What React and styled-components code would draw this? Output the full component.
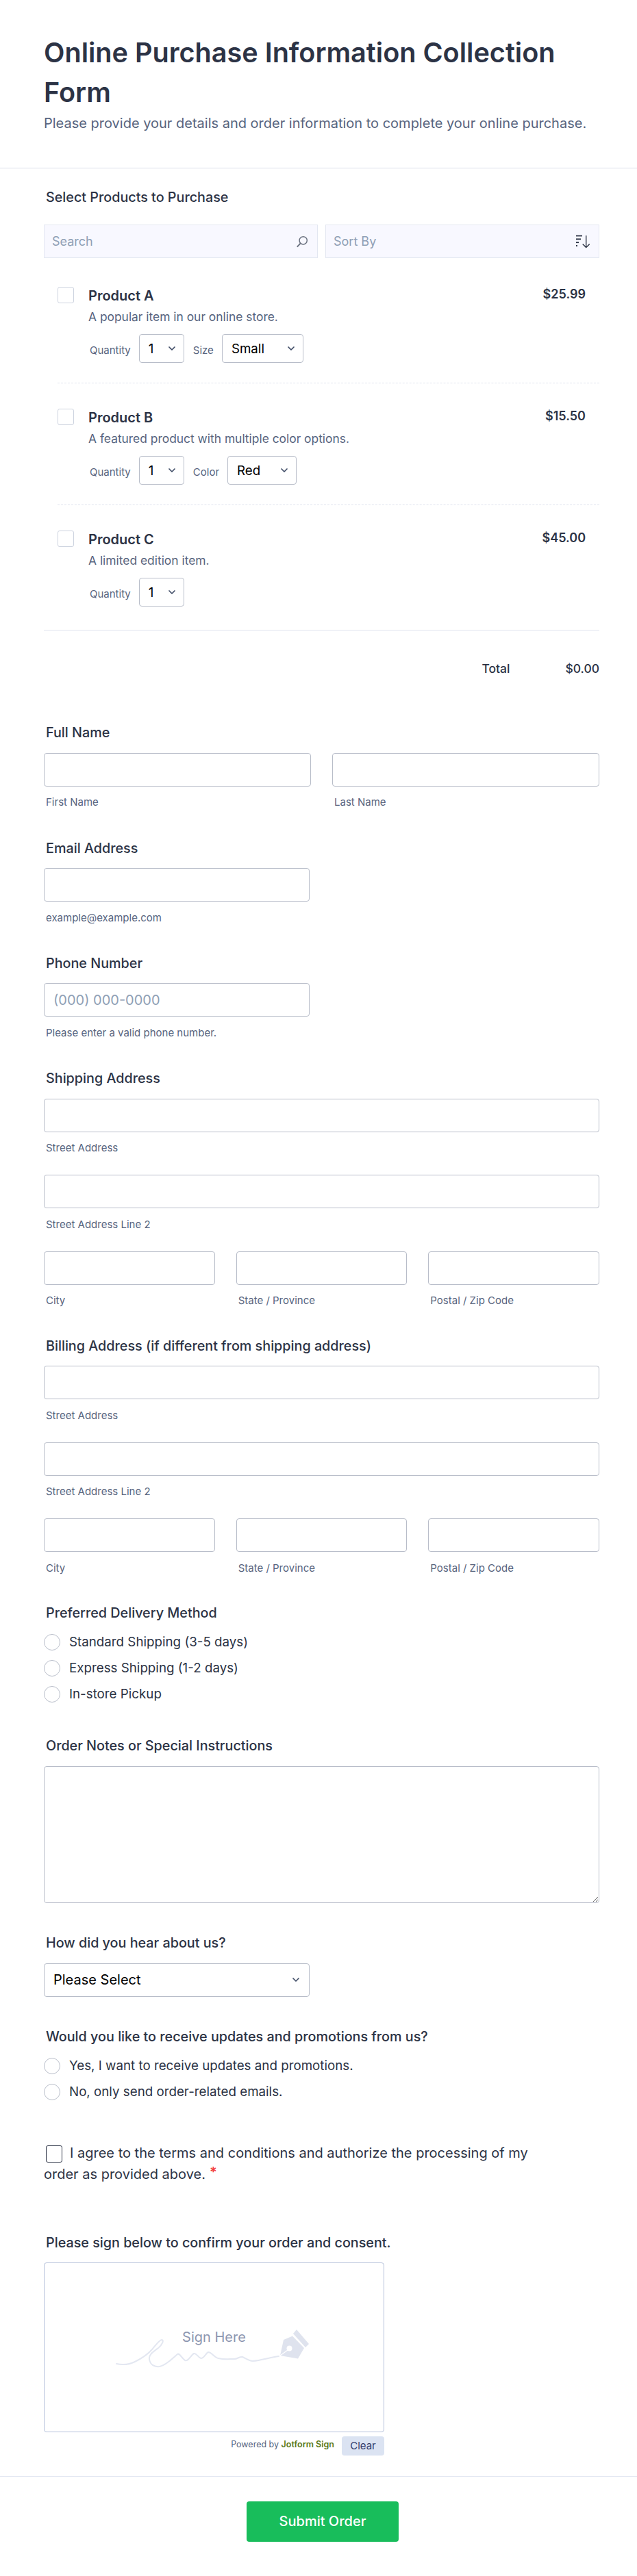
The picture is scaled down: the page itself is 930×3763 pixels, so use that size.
import React from 'react';
import styled, { createGlobalStyle } from 'styled-components';
import { ChevronDown } from 'lucide-react';

const GlobalStyle = createGlobalStyle`
  html, body {
    margin: 0;
    padding: 0;
    background: #fff;
  }
  body {
    font-family: Inter, "Noto Sans", sans-serif;
    color: #2c3345;
  }
  * {
    box-sizing: border-box;
  }
`;

const Page = styled.div`
  width: 930px;
  height: 3763px;
  overflow: hidden;
  background: #fff;
`;

const Header = styled.header`
  padding: 48px 64px 53px;
  border-bottom: 1px solid #dadee9;
`;

const Title = styled.h1`
  margin: 0;
  font-size: 39.6px;
  line-height: 58px;
  font-weight: 600;
  color: #2c3345;
`;

const Subtitle = styled.p`
  margin: 4px 0 0;
  font-size: 20px;
  line-height: 24px;
  color: #57647e;
`;

const Body = styled.div`
  padding: 29px 55px 0 64px;
`;

const Label = styled.div`
  margin: ${p => p.$top || 0}px 0 0 3px;
  font-size: 19.75px;
  line-height: 26px;
  font-weight: 500;
  color: #2c3345;
`;

const Toolbar = styled.div`
  display: grid;
  grid-template-columns: 1fr 1fr;
  gap: 11px;
  margin-top: 27px;
`;

const ToolBox = styled.div`
  height: 49px;
  display: flex;
  align-items: center;
  justify-content: space-between;
  padding: 0 13px 0 11px;
  background: #f8f8ff;
  border: 1px solid #e3e7f1;
  font-size: 18px;
  color: #8f9fb5;
`;

const Product = styled.div`
  display: flex;
  margin-left: 20px;
  padding: ${p => p.$first ? '42px' : '37px'} 20px ${p => p.$last ? '34px' : '29px'} 0;
  border-bottom: ${p => p.$last ? 'none' : '1px dashed #dfe3ee'};
`;

const ProductCheck = styled.span`
  flex: none;
  width: 24px;
  height: 24px;
  margin-right: 21px;
  border: 1px solid #cdd3df;
  border-radius: 3px;
`;

const ProductInfo = styled.div`
  flex: 1;
`;

const ProductName = styled.div`
  font-size: 20px;
  line-height: 26px;
  font-weight: 600;
  color: #2c3345;
`;

const ProductDesc = styled.div`
  margin-top: 5px;
  font-size: 17.4px;
  line-height: 26px;
  color: #57647e;
`;

const Options = styled.div`
  display: flex;
  align-items: center;
  margin-top: 12px;
`;

const OptionLabel = styled.span`
  margin: 5px 12px 0 ${p => p.$first ? '2px' : '13px'};
  font-size: 15px;
  line-height: 18px;
  color: #57647e;
`;

const Price = styled.div`
  flex: none;
  font-size: 18px;
  line-height: 22px;
  font-weight: 600;
  color: #2c3345;
`;

const TotalRow = styled.div`
  display: flex;
  justify-content: flex-end;
  gap: 81px;
  padding: 44px 0 0;
  border-top: 1px solid #dfe3ee;
  font-size: 17.5px;
  line-height: 24px;
  font-weight: 500;
  color: #2c3345;
`;

const SelectWrap = styled.div`
  position: relative;
  width: ${p => p.$width}px;
  height: ${p => p.$height || 42}px;
  flex: none;
  svg {
    position: absolute;
    top: 50%;
    right: ${p => p.$arrow || 10}px;
    transform: translateY(-50%);
    color: #3f4c66;
    pointer-events: none;
  }
`;

const SelectBox = styled.select`
  display: block;
  appearance: none;
  width: 100%;
  height: 100%;
  padding: 0 0 0 13px;
  background: #fff;
  border: 1px solid #b8bdc9;
  border-radius: 4px;
  font-family: Inter, sans-serif;
  font-size: ${p => p.$size || 18.75}px;
  color: #000;
`;

const Row = styled.div`
  display: grid;
  grid-template-columns: ${p => p.$cols};
  gap: 31px;
  margin-top: ${p => p.$top || 0}px;
`;

const Input = styled.input`
  display: block;
  width: ${p => p.$width || '100%'};
  height: 49px;
  padding: 0 13px;
  background: #fff;
  border: 1px solid #b8bdc9;
  border-radius: 4px;
  font-family: Inter, sans-serif;
  font-size: 20px;
  &::placeholder {
    color: #8f9fb5;
    opacity: 1;
  }
`;

const SubLabel = styled.div`
  margin: 14.5px 0 0 3px;
  font-size: 15px;
  line-height: 18px;
  color: #57647e;
`;

const FieldInput = styled.div`
  margin-top: 16.5px;
`;

const Radios = styled.div`
  display: flex;
  flex-direction: column;
  gap: 14.3px;
  margin-top: 18px;
`;

const RadioRow = styled.div`
  display: flex;
  align-items: center;
  gap: 13px;
  font-size: 18.75px;
  line-height: 24px;
  color: #2c3345;
`;

const RadioDot = styled.span`
  flex: none;
  width: 24px;
  height: 24px;
  border: 1px solid #b8bdc9;
  border-radius: 50%;
`;

const Notes = styled.textarea`
  display: block;
  width: 100%;
  height: 200px;
  margin-top: 17px;
  background: #fff;
  border: 1px solid #b8bdc9;
  border-radius: 4px;
`;

const Terms = styled.div`
  width: 740px;
  margin-top: 63px;
  font-size: 20px;
  line-height: 28px;
  color: #2c3345;
`;

const TermsBox = styled.span`
  display: inline-block;
  width: 24px;
  height: 25px;
  margin: 0 11px 0 3px;
  border: 1.5px solid #2c3345;
  border-radius: 3px;
  vertical-align: -7px;
`;

const Star = styled.span`
  margin-left: 6px;
  color: #f23a3c;
  font-weight: 600;
  vertical-align: 3px;
`;

const Signature = styled.div`
  position: relative;
  width: 497px;
  height: 248px;
  margin-top: 16px;
  border: 1px solid #b4c0da;
  border-radius: 4px;
`;

const SignHere = styled.span`
  position: absolute;
  left: 0;
  right: 0;
  top: 95px;
  text-align: center;
  font-size: 20px;
  line-height: 26px;
  color: #8d96b0;
`;

const SignDrawing = styled.svg`
  position: absolute;
  left: 100px;
  top: 86px;
`;

const SignFooter = styled.div`
  width: 497px;
  display: flex;
  justify-content: flex-end;
  align-items: center;
  gap: 11px;
  margin-top: 6px;
`;

const Powered = styled.span`
  margin-bottom: 4px;
  font-size: 12.5px;
  line-height: 16px;
  color: #57647e;
  b {
    font-weight: 600;
    color: #5b7a1a;
  }
`;

const ClearButton = styled.button`
  width: 62px;
  height: 28px;
  padding: 0;
  background: #dbe3f2;
  border: none;
  border-radius: 4px;
  font-family: Inter, sans-serif;
  font-size: 15px;
  color: #343c6a;
`;

const Footer = styled.footer`
  display: flex;
  justify-content: center;
  margin-top: 30px;
  padding: 36px 0 0;
  border-top: 1px solid #e3e7f1;
`;

const Submit = styled.button`
  width: 222px;
  height: 59px;
  margin-left: 12px;
  background: #18bd5b;
  border: none;
  border-radius: 4px;
  font-family: Inter, sans-serif;
  font-size: 20px;
  font-weight: 500;
  color: #fff;
`;

const SearchIcon = () => (
  <svg width="18" height="18" viewBox="0 0 18 18" fill="none" stroke="#6b7280">
    <circle cx="10.7" cy="7.3" r="5.6" strokeWidth="1.5" />
    <path d="M6.8 11.4 1.8 16.6" strokeWidth="2" />
  </svg>
);

const SortIcon = () => (
  <svg width="20" height="20" viewBox="0 0 20 20" fill="none" stroke="#2c3345">
    <path d="M0 1.5h9" strokeWidth="1.8" />
    <path d="M0 6.3h7" strokeWidth="1.8" />
    <path d="M0 11.2h4" strokeWidth="1.8" />
    <path d="M0 16h2" strokeWidth="1.8" />
    <path d="M14.7 1v17.5M9.7 13.5l5 5 5-5" strokeWidth="1.4" />
  </svg>
);

const Dropdown = ({ width, height, arrow, size, value }) => (
  <SelectWrap $width={width} $height={height} $arrow={arrow}>
    <SelectBox $size={size}><option>{value}</option></SelectBox>
    <ChevronDown size={16} strokeWidth={2.5} />
  </SelectWrap>
);

const ProductRow = ({ name, desc, price, first, last, extra }) => (
  <Product $first={first} $last={last}>
    <ProductCheck />
    <ProductInfo>
      <ProductName>{name}</ProductName>
      <ProductDesc>{desc}</ProductDesc>
      <Options>
        <OptionLabel $first>Quantity</OptionLabel>
        <Dropdown width={66} value="1" />
        {extra && <OptionLabel>{extra.label}</OptionLabel>}
        {extra && <Dropdown width={extra.width} value={extra.value} />}
      </Options>
    </ProductInfo>
    <Price>{price}</Price>
  </Product>
);

const AddressBlock = () => (
  <FieldInput>
    <Input />
    <SubLabel>Street Address</SubLabel>
    <Row $cols="1fr" $top={30}>
      <div>
        <Input />
        <SubLabel>Street Address Line 2</SubLabel>
      </div>
    </Row>
    <Row $cols="1fr 1fr 1fr" $top={30}>
      <div><Input /><SubLabel>City</SubLabel></div>
      <div><Input /><SubLabel>State / Province</SubLabel></div>
      <div><Input /><SubLabel>Postal / Zip Code</SubLabel></div>
    </Row>
  </FieldInput>
);

export default function App() {
  return (
    <Page>
      <GlobalStyle />
      <Header>
        <Title>Online Purchase Information Collection Form</Title>
        <Subtitle>Please provide your details and order information to complete your online purchase.</Subtitle>
      </Header>
      <Body>
        <Label>Select Products to Purchase</Label>
        <Toolbar>
          <ToolBox>Search<SearchIcon /></ToolBox>
          <ToolBox>Sort By<SortIcon /></ToolBox>
        </Toolbar>
        <ProductRow first name="Product A" desc="A popular item in our online store." price="$25.99"
          extra={{ label: 'Size', width: 119, value: 'Small' }} />
        <ProductRow name="Product B" desc="A featured product with multiple color options." price="$15.50"
          extra={{ label: 'Color', width: 101, value: 'Red' }} />
        <ProductRow last name="Product C" desc="A limited edition item." price="$45.00" />
        <TotalRow><span>Total</span><span>$0.00</span></TotalRow>

        <Label $top={68.4}>Full Name</Label>
        <FieldInput>
          <Row $cols="1fr 1fr">
            <div><Input /><SubLabel>First Name</SubLabel></div>
            <div><Input /><SubLabel>Last Name</SubLabel></div>
          </Row>
        </FieldInput>

        <Label $top={44.3}>Email Address</Label>
        <FieldInput>
          <Input $width="388px" />
          <SubLabel>example@example.com</SubLabel>
        </FieldInput>

        <Label $top={44.3}>Phone Number</Label>
        <FieldInput>
          <Input $width="388px" placeholder="(000) 000-0000" />
          <SubLabel>Please enter a valid phone number.</SubLabel>
        </FieldInput>

        <Label $top={44.3}>Shipping Address</Label>
        <AddressBlock />

        <Label $top={43.3}>Billing Address (if different from shipping address)</Label>
        <AddressBlock />

        <Label $top={43}>Preferred Delivery Method</Label>
        <Radios>
          <RadioRow><RadioDot />Standard Shipping (3-5 days)</RadioRow>
          <RadioRow><RadioDot />Express Shipping (1-2 days)</RadioRow>
          <RadioRow><RadioDot />In-store Pickup</RadioRow>
        </Radios>

        <Label $top={50}>Order Notes or Special Instructions</Label>
        <Notes />

        <Label $top={45}>How did you hear about us?</Label>
        <FieldInput>
          <Dropdown width={388} height={49} arrow={12} size={20} value="Please Select" />
        </FieldInput>

        <Label $top={45}>Would you like to receive updates and promotions from us?</Label>
        <Radios>
          <RadioRow><RadioDot />Yes, I want to receive updates and promotions.</RadioRow>
          <RadioRow><RadioDot />No, only send order-related emails.</RadioRow>
        </Radios>

        <Terms>
          <TermsBox />I agree to the terms and conditions and authorize the processing of my order as provided above.<Star>*</Star>
        </Terms>

        <Label $top={73}>Please sign below to confirm your order and consent.</Label>
        <Signature>
          <SignDrawing width="300" height="90" viewBox="0 0 300 90" fill="none">
            <path d="M5 61C14 63 24 62 32 58C42 53 50 48 57 40C62 34 68 26 71 26C75 26 72 33 66 38C58 44 52 48 53 54C54 62 60 66 68 65C78 63 88 52 94 47C97 45 99 51 105 56C110 58 114 48 118 46C122 45 125 53 129 53C133 53 136 45 139 44C144 44 148 52 154 53C162 55 170 54 177 54C182 54 185 50 189 51C194 53 198 57 204 57C216 56 228 52 242 50"
              stroke="#e3e7f1" strokeWidth="2" strokeLinecap="round" />
            <path d="M244 49 249 26 262 20.5 279 38 270 53.5Z" fill="#dfe3ee" />
            <path d="M268 11 286 32 281 37 263 17Z" fill="#dfe3ee" />
            <circle cx="257.5" cy="38.5" r="4" fill="#fff" />
            <path d="M244 49 255 41" stroke="#fff" strokeWidth="1.2" />
          </SignDrawing>
          <SignHere>Sign Here</SignHere>
        </Signature>
        <SignFooter>
          <Powered>Powered by <b>Jotform Sign</b></Powered>
          <ClearButton>Clear</ClearButton>
        </SignFooter>
      </Body>
      <Footer>
        <Submit>Submit Order</Submit>
      </Footer>
    </Page>
  );
}
